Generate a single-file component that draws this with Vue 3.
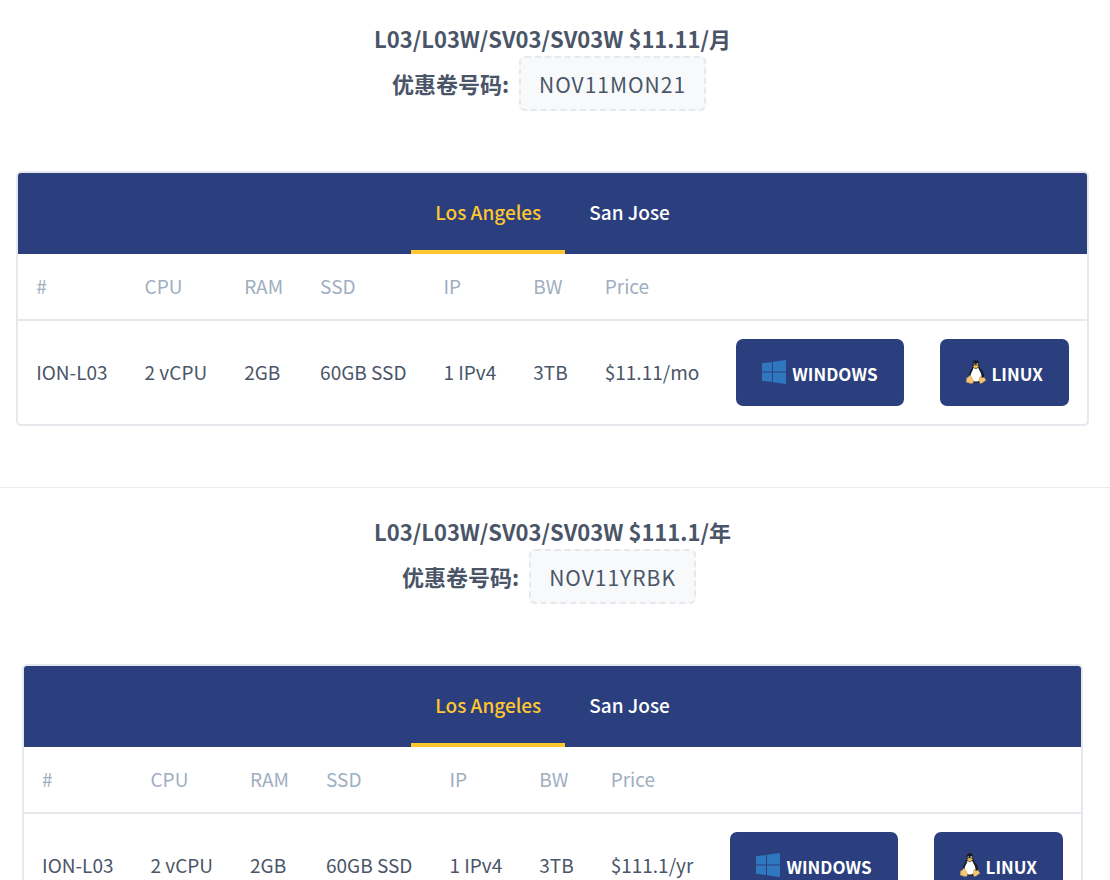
<script setup>
import { reactive } from 'vue'

const columns = ['#', 'CPU', 'RAM', 'SSD', 'IP', 'BW', 'Price']
const locations = ['Los Angeles', 'San Jose']

const offers = reactive([
  {
    title: 'L03/L03W/SV03/SV03W $11.11/月',
    code: 'NOV11MON21',
    cells: ['ION-L03', '2 vCPU', '2GB', '60GB SSD', '1 IPv4', '3TB', '$11.11/mo'],
    active: 0,
  },
  {
    title: 'L03/L03W/SV03/SV03W $111.1/年',
    code: 'NOV11YRBK',
    cells: ['ION-L03', '2 vCPU', '2GB', '60GB SSD', '1 IPv4', '3TB', '$111.1/yr'],
    active: 0,
  },
])
</script>

<template>
  <main class="page" lang="zh-CN">
    <section v-for="offer in offers" :key="offer.code" class="offer">
      <header class="promo">
        <h2 class="title">{{ offer.title }}</h2>
        <p class="coupon">
          <strong class="coupon-label">优惠卷号码:</strong>
          <code class="code">{{ offer.code }}</code>
        </p>
      </header>
      <div class="card">
        <div class="tabs" role="tablist">
          <button
            v-for="(location, i) in locations"
            :key="location"
            type="button"
            role="tab"
            class="tab"
            :class="{ active: offer.active === i }"
            :aria-selected="offer.active === i"
            @click="offer.active = i"
          >{{ location }}</button>
        </div>
        <table class="plans">
          <thead>
            <tr>
              <th v-for="column in columns" :key="column" scope="col">{{ column }}</th>
              <td class="action"></td>
              <td class="action"></td>
            </tr>
          </thead>
          <tbody>
            <tr>
              <td v-for="cell in offer.cells" :key="cell">{{ cell }}</td>
              <td class="action">
                <a class="buy" href="#windows">
                  <svg class="icon" viewBox="0 0 24 24" aria-hidden="true">
                    <path fill="#2f78bf" d="M0 3.2 10 1.900v9.500H0zM11 1.800 24 0v11.400H11zM0 12.600h10V22L0 20.700zM11 12.600h13V24l-13-1.800z" />
                  </svg>
                  <span class="buy-label">WINDOWS</span>
                </a>
              </td>
              <td class="action">
                <a class="buy" href="#linux">
                  <svg class="icon tux" viewBox="0 0 20 24" aria-hidden="true">
                    <path fill="#17191c" d="M9.8.3C7.5.3 6.5 2 6.6 4.2c.1 2 .2 3-1 4.7-1.600 2.300-2.700 4.600-2.900 7L2 18l4 4.500h8.300l3.700-4.300c.4-4-1-6.700-3.200-9-1.500-1.700-1.500-3-1.600-5C13.100 1.600 12 .3 9.800.3z" />
                    <path fill="#fff" d="M7.500 7.800c1.500 1.400 3.300 1.200 4.700 0 .8 2.100 3 4.400 3.300 7.700.2 3.300-1.800 6-5.300 6-3.600 0-5.900-2.200-5.800-5.100.1-3.400 2.500-5.200 3.100-8.600z" />
                    <ellipse cx="8.400" cy="4.300" rx=".9" ry="1.100" fill="#bbb" />
                    <ellipse cx="11.300" cy="4.300" rx="1" ry="1.200" fill="#bbb" />
                    <circle cx="8.700" cy="4.500" r=".5" fill="#17191c" />
                    <circle cx="11" cy="4.500" r=".5" fill="#17191c" />
                    <path fill="#e9b44c" d="M7 6.300c1-.9 2-1.400 2.900-1.400s1.800.6 2.800 1.100c.3 1-1.700 2.300-3 2.300-1.200 0-2.500-1-2.700-2z" />
                    <path fill="#f3c577" stroke="#b98534" stroke-width=".4" d="M3.300 15.600c1.300-.4 2.200 1.800 3.300 3.400 1.300 1.900 1.300 3.800-.4 4.400-1.500.6-3.100-.7-5-.9-1.200-.2-1.100-.8-.8-2 .3-1-.4-2.100.4-2.600.9-.4 1.500-.1 2.500-2.300z" />
                    <path fill="#f3c577" stroke="#b98534" stroke-width=".4" d="M14 16.500c-.6 1.900-1 4.300-.7 5.600.5 1.700 2.400 1.600 3.500.5 1-.9 1.600-1.300 2.600-1.800.8-.5.6-1-.2-1.700-.8-.8-.5-1.300-1-2.200-.9.900-2.900 1.300-4.200-.4z" />
                  </svg>
                  <span class="buy-label">LINUX</span>
                </a>
              </td>
            </tr>
          </tbody>
        </table>
      </div>
    </section>
  </main>
</template>

<style>
body {
  background: #fff;
}
#app {
  overflow-x: hidden;
}
</style>

<style scoped>
.page {
  font-family: "Noto Sans CJK SC", "Noto Sans", sans-serif;
  font-size: 19px;
  line-height: 30px;
  color: #4a5568;
}
.offer {
  padding: 23px 5px 61px 0;
  border-bottom: 1px solid #ebebeb;
}
.offer + .offer {
  padding-top: 28px;
}
.promo {
  text-align: center;
}
.title {
  margin: 0;
  font-size: 22px;
  line-height: 30px;
  font-weight: 700;
}
.coupon {
  display: flex;
  justify-content: center;
  align-items: center;
  gap: 10px;
  margin: 3px 0 60px;
  padding-right: 7px;
}
.coupon-label {
  padding-bottom: 2px;
  font-size: 22px;
}
.code {
  padding: 12px 18px 10px;
  border: 2px dashed #e5e9ed;
  border-radius: 6px;
  background: #f7f9fb;
  font-family: inherit;
  font-size: 21px;
  line-height: 29px;
  letter-spacing: 1px;
}
.card {
  width: fit-content;
  margin: 0 auto;
  border: 2px solid #e5e9ed;
  border-radius: 5px;
  overflow: hidden;
}
.tabs {
  display: flex;
  justify-content: center;
  background: #2b3f7e;
}
.tab {
  height: 81px;
  padding: 0 24px 4px;
  border: 0;
  border-bottom: 4px solid transparent;
  border-top: 4px solid transparent;
  background: none;
  color: #fff;
  font: inherit;
  font-weight: 500;
  cursor: pointer;
}
.tab.active {
  color: #ffc72e;
  border-bottom-color: #ffc72e;
}
.plans {
  border-collapse: separate;
  border-spacing: 0;
  white-space: nowrap;
}
.plans th,
.plans td {
  padding: 17px 19px 18px 18px;
  text-align: left;
}
.plans .action {
  padding: 18px;
}
.plans thead th,
.plans thead td {
  border-bottom: 2px solid #e5e9ed;
  color: #a0aec0;
  font-weight: 400;
}
.plans thead .action {
  padding: 0;
}
.buy {
  display: flex;
  align-items: center;
  gap: 6px;
  height: 65px;
  padding: 0 26px 2px;
  border-radius: 7px;
  background: #2b3f7e;
  color: #fff;
  font-size: 17px;
  font-weight: 700;
  text-decoration: none;
}
.icon {
  width: 24px;
  height: 24px;
}
.tux {
  width: 20px;
}
.buy-label {
  padding-top: 4px;
}
</style>
